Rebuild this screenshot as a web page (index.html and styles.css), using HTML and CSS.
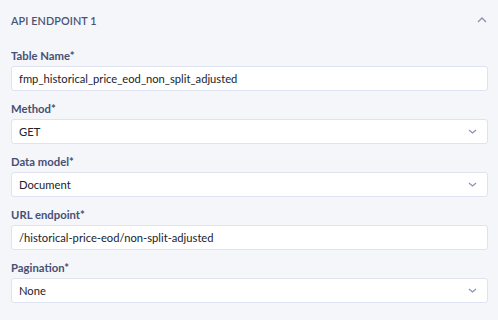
FILE: index.html
```html
<!DOCTYPE html>
<html>
<head>
<meta charset="utf-8">
<link rel="stylesheet" href="styles.css">
</head>
<body>
<div class="panel">
  <div class="header">
    <span class="title">API ENDPOINT 1</span>
    <svg class="chev-up" width="10" height="6" viewBox="0 0 10 6"><path d="M1 5 L5 1 L9 5" fill="none" stroke="#8891b5" stroke-width="1.3"/></svg>
  </div>
  <div class="form">
    <div class="field">
      <label class="label">Table Name*</label>
      <div class="input">fmp_historical_price_eod_non_split_adjusted</div>
    </div>
    <div class="field">
      <label class="label">Method*</label>
      <div class="input select"><span>GET</span><svg class="chev" width="9" height="5" viewBox="0 0 9 5"><path d="M1 1 L4.5 4 L8 1" fill="none" stroke="#8891b5" stroke-width="1.2"/></svg></div>
    </div>
    <div class="field">
      <label class="label">Data model*</label>
      <div class="input select"><span>Document</span><svg class="chev" width="9" height="5" viewBox="0 0 9 5"><path d="M1 1 L4.5 4 L8 1" fill="none" stroke="#8891b5" stroke-width="1.2"/></svg></div>
    </div>
    <div class="field">
      <label class="label">URL endpoint*</label>
      <div class="input">/historical-price-eod/non-split-adjusted</div>
    </div>
    <div class="field">
      <label class="label">Pagination*</label>
      <div class="input select"><span>None</span><svg class="chev" width="9" height="5" viewBox="0 0 9 5"><path d="M1 1 L4.5 4 L8 1" fill="none" stroke="#8891b5" stroke-width="1.2"/></svg></div>
    </div>
  </div>
</div>
</body>
</html>
```
FILE: styles.css
```css
html, body {
  margin: 0;
  padding: 0;
  background: #f5f6fa;
}
body {
  font-family: Lato, "Open Sans", sans-serif;
  width: 498px;
  height: 320px;
  overflow: hidden;
}
.panel {
  padding: 0 10px 0 11px;
}
.header {
  height: 40px;
  display: flex;
  align-items: center;
  justify-content: space-between;
}
.title {
  font-size: 10.8px;
  font-weight: 600;
  color: #4b5372;
  letter-spacing: 0.1px;
}
.chev-up {
  margin-right: 1px;
}
.form {
  display: flex;
  flex-direction: column;
  gap: 11px;
  padding-top: 9px;
}
.field {
  display: flex;
  flex-direction: column;
  gap: 3px;
}
.label {
  font-size: 11.3px;
  font-weight: 700;
  color: #465075;
  line-height: 14px;
}
.input {
  box-sizing: border-box;
  height: 25px;
  background: #fff;
  border: 1px solid #dfe3f1;
  border-radius: 3px;
  padding: 0 7px;
  display: flex;
  align-items: center;
  justify-content: space-between;
  font-size: 11.2px;
  color: #20232c;
}
.chev {
  margin-right: 3px;
}
```
